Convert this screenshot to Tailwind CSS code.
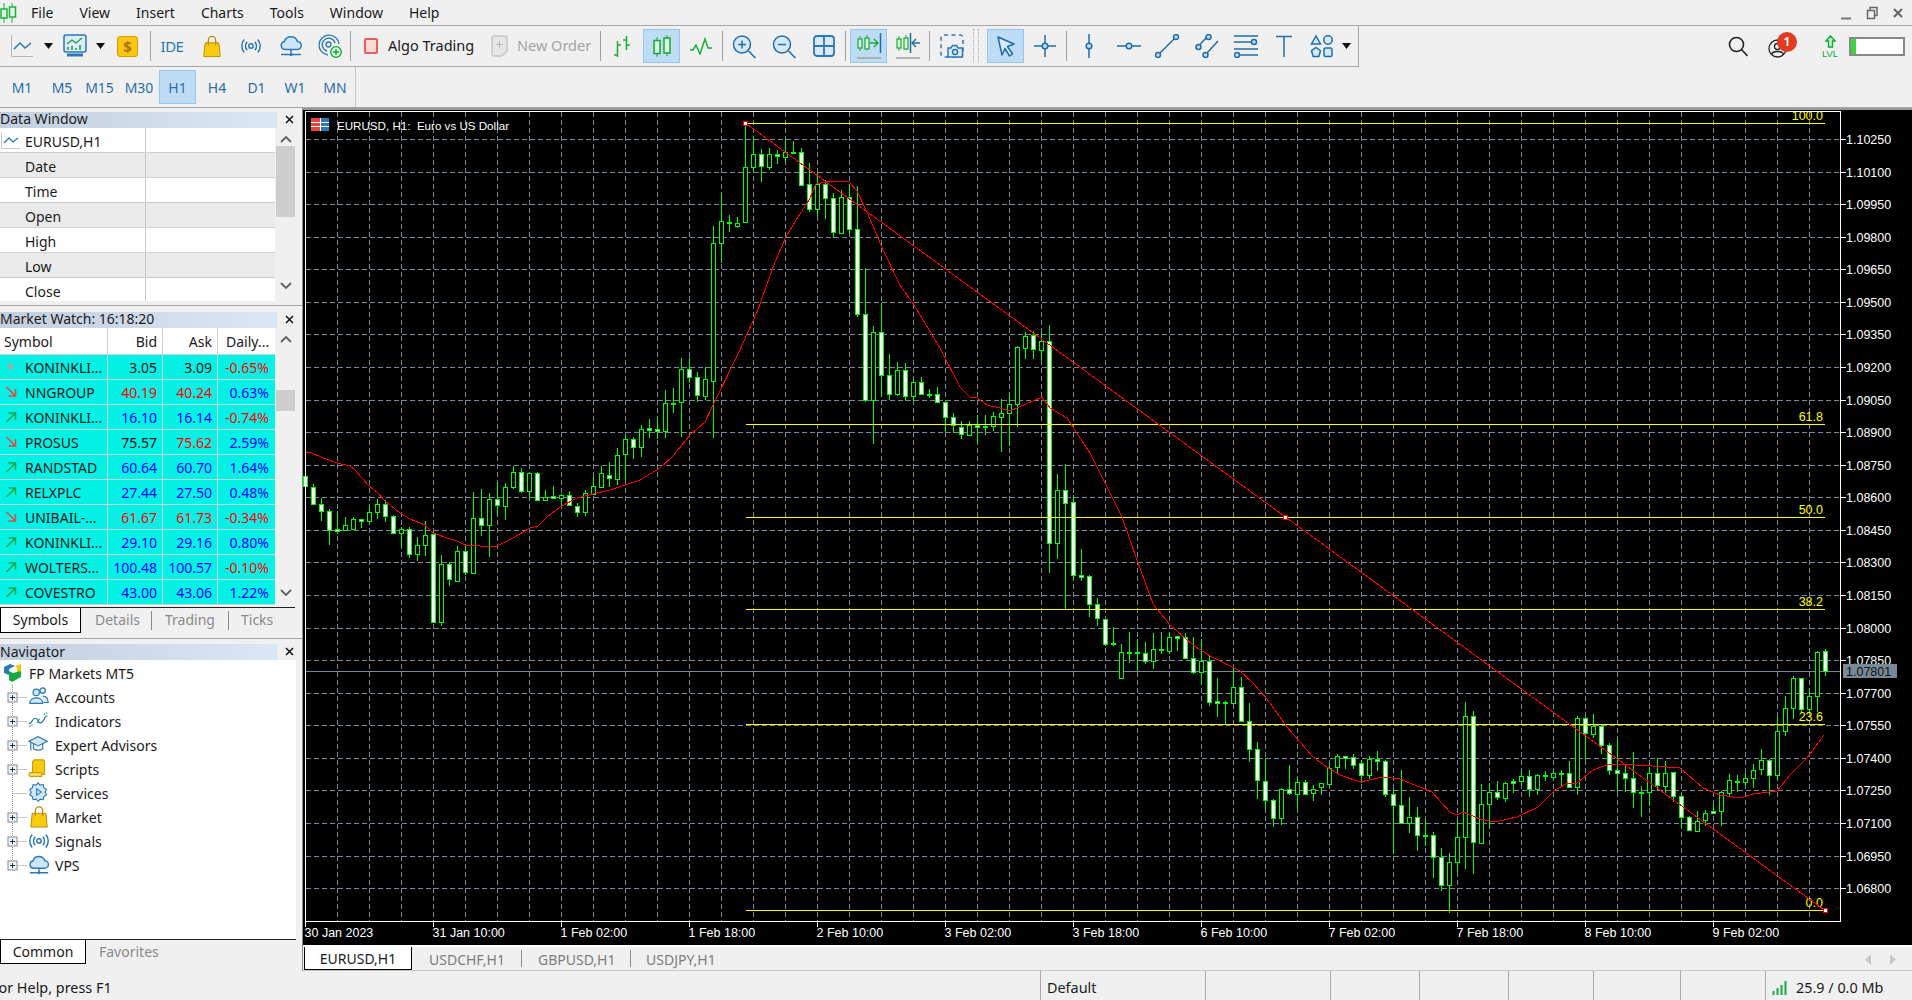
<!DOCTYPE html>
<html lang="en">
<head>
<meta charset="UTF-8" />
<title>MetaTrader 5</title>
<script src="https://cdn.jsdelivr.net/npm/@tailwindcss/browser@4"></script>
</head>
<body class="w-[1912px] h-[1000px] overflow-hidden bg-[#f0f0f0] text-[14px] text-[#1a1a1a] font-['Noto_Sans',sans-serif]">

<!-- shared icons -->
<svg class="hidden">
  <symbol id="i-bag" viewBox="0 0 24 24"><path d="M4.500 8h15l1.500 15H3z" fill="#f8cb10" stroke="#b98a00"/><path d="M8 11V5a4 4 0 0 1 8 0v6" fill="none" stroke="#b98a00" stroke-width="1.400"/></symbol>
  <symbol id="i-signal" viewBox="0 0 24 24"><g fill="none" stroke="#2a78b5" stroke-width="1.600"><circle cx="12" cy="12" r="2.400"/><path d="M7.800 7.500a6.500 6.500 0 0 0 0 9M16.200 7.500a6.500 6.500 0 0 1 0 9M4.600 5a10.500 10.500 0 0 0 0 14M19.400 5a10.500 10.500 0 0 1 0 14"/></g></symbol>
  <symbol id="i-cloud" viewBox="0 0 24 24"><path d="M6 15.500a4 4 0 0 1-.6-7.900 6.800 6.800 0 0 1 13-.2 4 4 0 0 1-.4 8.100z" fill="#cde5f8" stroke="#2a78b5" stroke-width="1.500"/><path d="M12 15.500v5M2 20.500h20" stroke="#2a78b5" stroke-width="1.500" fill="none"/><circle cx="12" cy="20.500" r="1.600" fill="#2a78b5"/></symbol>
  <symbol id="i-zoom" viewBox="0 0 24 24"><circle cx="10" cy="10" r="8.500" fill="#d5e9f9" stroke="#1f6ca8" stroke-width="1.500"/><path d="M16.500 16.500l7 7" stroke="#1f6ca8" stroke-width="1.500"/></symbol>
</svg>

<!-- menu -->
<div class="flex h-[26px] items-center border-b border-[#a6a6a6]">
  <svg class="ml-0 h-[20px] w-[17px]" viewBox="0 0 17 20"><path d="M4 0v20M12 0v20" stroke="#19b33a"/><rect x="1" y="6" width="6" height="9" fill="#dff7e2" stroke="#19b33a" stroke-width="1.500"/><rect x="9.500" y="4" width="6" height="10" fill="#dff7e2" stroke="#19b33a" stroke-width="1.500"/></svg>
  <nav class="ml-[14px] flex gap-[26px]">
    <span>File</span><span>View</span><span>Insert</span><span>Charts</span><span>Tools</span><span>Window</span><span>Help</span>
  </nav>
  <div class="ml-auto flex items-center gap-[14px] pr-[8px]">
    <svg class="h-[14px] w-[12px]" viewBox="0 0 12 14"><path d="M1 12.500h10" stroke="#777" stroke-width="2"/></svg>
    <svg class="h-[14px] w-[12px]" viewBox="0 0 12 14"><path d="M1.500 4.500h7v8h-7zM4 4V1.500h7v8H9" fill="none" stroke="#666" stroke-width="1.500"/></svg>
    <svg class="h-[14px] w-[12px]" viewBox="0 0 12 14"><path d="M2 3l8 8M10 3l-8 8" stroke="#666" stroke-width="2"/></svg>
  </div>
</div>

<!-- main toolbar -->
<div class="flex h-[41px]">
  <div class="flex w-[1359px] items-center border-r border-b border-[#a6a6a6] pl-[2px]">
    <div class="flex w-[39px] justify-center"><svg class="h-[22px] w-[22px]" viewBox="0 0 22 22"><path d="M.5 0v21.500H22" fill="none" stroke="#b5b5b5"/><path d="M3 14l6-6 5 5 6-5" fill="none" stroke="#2a78b5" stroke-width="1.500"/></svg></div>
    <div class="flex w-[14px] justify-center"><svg class="h-[6px] w-[9px]" viewBox="0 0 9 6"><path d="M0 0h9L4.500 6z" fill="#111"/></svg></div>
    <div class="flex w-[40px] justify-center"><svg class="h-[24px] w-[24px]" viewBox="0 0 24 24"><rect x="1" y="1" width="22" height="17" rx="2" fill="#d9ecfa" stroke="#2a78b5" stroke-width="1.500"/><path d="M4 10l5-4 4 3 6-5" fill="none" stroke="#1f9c3c" stroke-width="1.200"/><path d="M5 16v-3M9 16v-4M13 16v-2M17 16v-5" stroke="#1f9c3c" stroke-width="1.500"/><path d="M4 21h16" stroke="#2a78b5" stroke-width="3"/></svg></div>
    <div class="flex w-[10px] justify-center"><svg class="h-[6px] w-[9px]" viewBox="0 0 9 6"><path d="M0 0h9L4.500 6z" fill="#111"/></svg></div>
    <div class="flex w-[45px] justify-center"><div class="flex h-[21px] w-[21px] items-center justify-center rounded-[3px] border border-[#d99c00] bg-[#fbc513] text-[15px] font-bold text-[#a97300]">$</div></div>
    <div class="h-[30px] w-px bg-[#a0a0a0]"></div>
    <div class="flex w-[42px] justify-center text-[15px] tracking-[-0.5px] text-[#2a78b5]">IDE</div>
    <div class="flex w-[38px] justify-center"><svg class="h-[23px] w-[22px]"><use href="#i-bag"/></svg></div>
    <div class="flex w-[40px] justify-center"><svg class="h-[22px] w-[22px]"><use href="#i-signal"/></svg></div>
    <div class="flex w-[39px] justify-center"><svg class="h-[24px] w-[24px]"><use href="#i-cloud"/></svg></div>
    <div class="flex w-[40px] justify-center"><svg class="h-[24px] w-[24px]" viewBox="0 0 24 24"><g fill="none" stroke="#2a78b5" stroke-width="1.300"><path d="M10 21a10 10 0 1 1 11-11"/><path d="M9 17a6.500 6.500 0 1 1 8-8"/><circle cx="10.500" cy="10.500" r="2.500"/></g><circle cx="18" cy="18" r="5.300" fill="#d8f5df" stroke="#16a53a" stroke-width="1.300"/><path d="M18 15v6M15 18h6" stroke="#16a53a" stroke-width="1.300"/></svg></div>
    <div class="h-[30px] w-px bg-[#a0a0a0]"></div>
    <div class="ml-[13px] h-[16px] w-[14px] rounded-[2px] border-2 border-[#e8605a] bg-[#fbd9d5]"></div>
    <span class="ml-[10px] w-[86px] text-[14.500px] whitespace-nowrap">Algo Trading</span>
    <svg class="ml-[17px] h-[22px] w-[17px]" viewBox="0 0 17 22"><path d="M1 3a2 2 0 0 1 2-2h11a2 2 0 0 1 2 2v13l-5 5H3a2 2 0 0 1-2-2z" fill="#e6e6e6" stroke="#c4c4c4" stroke-width="1.400"/><path d="M8.500 6v7M5 9.500h7" stroke="#b5b5b5"/></svg>
    <span class="ml-[9px] w-[73px] text-[14.500px] whitespace-nowrap text-[#a3a3a3]">New Order</span>
    <div class="ml-[10px] h-[30px] w-px bg-[#a0a0a0]"></div>
    <div class="flex w-[42px] justify-center"><svg class="h-[24px] w-[20px]" viewBox="0 0 20 24"><path d="M5.500 7v16M2 21h3.500M5.500 11H9M14.500 2v14M11 6h3.500M14.500 11H18" fill="none" stroke="#17ad37" stroke-width="1.500"/></svg></div>
    <div class="flex h-[34px] w-[37px] items-center justify-center border border-[#91c8f6] bg-[#bedcf4]"><svg class="h-[24px] w-[20px]" viewBox="0 0 20 24"><path d="M5 3v20M15 1v21" stroke="#15a835"/><rect x="2" y="6.500" width="6" height="13" fill="#d9f8df" stroke="#15a835" stroke-width="1.500"/><rect x="12" y="4" width="6" height="15" fill="#d9f8df" stroke="#15a835" stroke-width="1.500"/></svg></div>
    <div class="flex w-[42px] justify-center"><svg class="h-[18px] w-[22px]" viewBox="0 0 22 18"><path d="M0 13h3l3-5 4 9 5-15 3 9h4" fill="none" stroke="#17ad37" stroke-width="1.500"/></svg></div>
    <div class="h-[30px] w-px bg-[#a0a0a0]"></div>
    <div class="flex w-[42px] justify-center"><svg class="h-[25px] w-[24px]" viewBox="0 0 24 24"><use href="#i-zoom"/><path d="M10 6v8M6 10h8" stroke="#1f6ca8" stroke-width="1.500"/></svg></div>
    <div class="flex w-[38px] justify-center"><svg class="h-[25px] w-[24px]" viewBox="0 0 24 24"><use href="#i-zoom"/><path d="M6 10h8" stroke="#1f6ca8" stroke-width="1.500"/></svg></div>
    <div class="flex w-[42px] justify-center"><svg class="h-[22px] w-[22px]" viewBox="0 0 22 22"><rect x="1" y="1" width="20" height="20" rx="3" fill="#d9ebf9" stroke="#2a78b5" stroke-width="1.800"/><path d="M11 1v20M1 11h20" stroke="#2a78b5" stroke-width="1.800"/></svg></div>
    <div class="h-[30px] w-px bg-[#a0a0a0]"></div>
    <div class="ml-[4px] flex h-[34px] w-[37px] items-center justify-center border border-[#91c8f6] bg-[#bedcf4]"><svg class="h-[28px] w-[26px]" viewBox="0 0 26 28"><path d="M4 4v15M11 3v15" stroke="#15a835"/><rect x="2" y="7" width="4" height="9" fill="#d9f8df" stroke="#15a835" stroke-width="1.200"/><rect x="9" y="6" width="4" height="11" fill="#d9f8df" stroke="#15a835" stroke-width="1.200"/><path d="M14 11h7M18 7l4 4-4 4" fill="none" stroke="#15a835" stroke-width="1.400"/><path d="M24.500 1v20" stroke="#1f6ca8" stroke-width="1.500"/><path d="M1 26h24" stroke="#a0a0a0" stroke-width="1.500"/></svg></div>
    <div class="flex w-[42px] justify-center"><svg class="h-[28px] w-[26px]" viewBox="0 0 26 28"><path d="M4 4v15M11 3v15" stroke="#15a835"/><rect x="2" y="7" width="4" height="9" fill="#d9f8df" stroke="#15a835" stroke-width="1.200"/><rect x="9" y="6" width="4" height="11" fill="#d9f8df" stroke="#15a835" stroke-width="1.200"/><path d="M15.500 1v20" stroke="#1f6ca8" stroke-width="1.500"/><path d="M25 11h-7M21 7l-4 4 4 4" fill="none" stroke="#1f6ca8" stroke-width="1.400"/><path d="M1 26h24" stroke="#a0a0a0" stroke-width="1.500"/></svg></div>
    <div class="h-[30px] w-px bg-[#a0a0a0]"></div>
    <div class="flex w-[43px] justify-center"><svg class="h-[24px] w-[24px]" viewBox="0 0 24 24"><rect x="1" y="1" width="22" height="22" rx="3" fill="none" stroke="#2a78b5" stroke-width="1.500" stroke-dasharray="4 3.500"/><path d="M8 23v-9h3l1.500-2.500h4l1.500 2.500h4.500v9z" fill="#d9ebf9" stroke="#2a78b5" stroke-width="1.500"/><circle cx="15" cy="18" r="2.500" fill="none" stroke="#2a78b5" stroke-width="1.500"/></svg></div>
    <div class="h-[34px] w-[6px] border-x border-dotted border-[#b0b0b0]"></div>
    <div class="ml-[8px] flex h-[34px] w-[37px] items-center justify-center border border-[#91c8f6] bg-[#bedcf4]"><svg class="h-[21px] w-[18px]" viewBox="0 0 18 21"><path d="M1 1l16 7-6.500 2.500L15.500 18l-3 2-4.500-7.500L5 19z" fill="#d9ebf9" stroke="#1f6ca8" stroke-width="1.500" stroke-linejoin="round"/></svg></div>
    <div class="flex w-[42px] justify-center"><svg class="h-[22px] w-[22px]" viewBox="0 0 22 22"><path d="M11 0v8M11 14v8M0 11h8M14 11h8" stroke="#1f6ca8" stroke-width="1.500"/><circle cx="11" cy="11" r="2.800" fill="#bfe0f8" stroke="#1f6ca8" stroke-width="1.500"/></svg></div>
    <div class="h-[30px] w-px bg-[#a0a0a0]"></div>
    <div class="flex w-[43px] justify-center"><svg class="h-[24px] w-[10px]" viewBox="0 0 10 24"><path d="M5 0v9M5 15v9" stroke="#1f6ca8" stroke-width="1.500"/><circle cx="5" cy="12" r="2.800" fill="#bfe0f8" stroke="#1f6ca8" stroke-width="1.500"/></svg></div>
    <div class="flex w-[37px] justify-center"><svg class="h-[10px] w-[24px]" viewBox="0 0 24 10"><path d="M0 5h9M15 5h9" stroke="#1f6ca8" stroke-width="1.500"/><circle cx="12" cy="5" r="2.800" fill="#bfe0f8" stroke="#1f6ca8" stroke-width="1.500"/></svg></div>
    <div class="flex w-[40px] justify-center"><svg class="h-[24px] w-[24px]" viewBox="0 0 24 24"><path d="M5 19L19 5" stroke="#1f6ca8" stroke-width="1.500"/><circle cx="3" cy="21" r="2.500" fill="#bfe0f8" stroke="#1f6ca8" stroke-width="1.500"/><circle cx="21" cy="3" r="2.500" fill="#bfe0f8" stroke="#1f6ca8" stroke-width="1.500"/></svg></div>
    <div class="flex w-[39px] justify-center"><svg class="h-[24px] w-[24px]" viewBox="0 0 24 24"><path d="M4.500 11L12 3M12 19l11-12" stroke="#1f6ca8" stroke-width="1.500"/><circle cx="3.500" cy="13" r="2.500" fill="#bfe0f8" stroke="#1f6ca8" stroke-width="1.500"/><circle cx="13.500" cy="3" r="2.500" fill="#bfe0f8" stroke="#1f6ca8" stroke-width="1.500"/><circle cx="10.500" cy="21" r="2.500" fill="#bfe0f8" stroke="#1f6ca8" stroke-width="1.500"/></svg></div>
    <div class="flex w-[39px] justify-center"><svg class="h-[24px] w-[24px]" viewBox="0 0 24 24"><path d="M0 2h24M0 8h17M0 15h24M6 21h18" stroke="#1f6ca8" stroke-width="1.500"/><circle cx="20" cy="8" r="2.500" fill="#bfe0f8" stroke="#1f6ca8" stroke-width="1.500"/><circle cx="3" cy="21" r="2.500" fill="#bfe0f8" stroke="#1f6ca8" stroke-width="1.500"/></svg></div>
    <div class="flex w-[38px] justify-center"><svg class="h-[22px] w-[16px]" viewBox="0 0 16 22"><path d="M0 1.500h16M8 1.500V22" stroke="#1f6ca8" stroke-width="1.500"/></svg></div>
    <div class="flex w-[37px] justify-center"><svg class="h-[24px] w-[24px]" viewBox="0 0 24 24"><g fill="#d3e8f9" stroke="#1f6ca8" stroke-width="1.500"><path d="M6 2l4.500 8h-9z"/><circle cx="18" cy="6" r="4.200"/><path d="M6 13.500l4.500 3.200-1.700 5.800H3.200l-1.700-5.800z"/><rect x="14" y="14" width="8" height="8.500" rx="1.500"/></g></svg></div>
    <div class="flex w-[12px] justify-center"><svg class="h-[6px] w-[9px]" viewBox="0 0 9 6"><path d="M0 0h9L4.500 6z" fill="#111"/></svg></div>
  </div>
  <!-- account / level widgets -->
  <div class="flex flex-1 items-center">
    <svg class="ml-[369px] h-[21px] w-[20px]" viewBox="0 0 20 21"><circle cx="8.500" cy="8.500" r="7" fill="none" stroke="#222" stroke-width="1.600"/><path d="M13.500 13.500l6 6.500" stroke="#222" stroke-width="1.600"/></svg>
    <div class="relative ml-[20px] h-[24px] w-[22px]">
      <svg class="mt-[4px] h-[19px] w-[19px]" viewBox="0 0 19 19"><circle cx="9.500" cy="9.500" r="8.500" fill="none" stroke="#222" stroke-width="1.300"/><circle cx="9.500" cy="7.500" r="3" fill="none" stroke="#222" stroke-width="1.300"/><path d="M3.500 15.500c1-4 11-4 12 0" fill="none" stroke="#222" stroke-width="1.300"/></svg>
      <span class="absolute -top-[3px] left-[9px] flex h-[20px] w-[20px] items-center justify-center rounded-full bg-[#e23b22] text-[13px] font-semibold text-white">1</span>
    </div>
    <div class="ml-[29px] flex w-[22px] flex-col items-center">
      <svg class="h-[13px] w-[11px]" viewBox="0 0 11 13"><path d="M5.500 1L10 6H7.500v6h-4V6H1z" fill="#c5f2cf" stroke="#11a833" stroke-width="1.400"/></svg>
      <span class="mt-[1px] font-['Liberation_Sans',sans-serif] text-[9.500px] leading-[10px] text-[#11a833]">LVL</span>
    </div>
    <div class="ml-[8px] flex h-[19px] w-[56px] border-2 border-[#888] bg-white"><div class="w-[5px] bg-[#3cd63c]"></div></div>
  </div>
</div>

<!-- timeframes -->
<div class="flex h-[41px] items-center border-b border-[#a6a6a6]">
  <div class="flex h-full w-[356px] items-center border-r border-[#c4c4c4] text-[#2b6ea6]">
    <span class="flex w-[44px] justify-center">M1</span>
    <span class="flex w-[36px] justify-center">M5</span>
    <span class="flex w-[39px] justify-center">M15</span>
    <span class="flex w-[40px] justify-center">M30</span>
    <span class="flex h-[34px] w-[37px] items-center justify-center border border-[#91c8f6] bg-[#bedcf4]">H1</span>
    <span class="flex w-[42px] justify-center">H4</span>
    <span class="flex w-[37px] justify-center">D1</span>
    <span class="flex w-[40px] justify-center">W1</span>
    <span class="flex w-[40px] justify-center">MN</span>
  </div>
</div>

<!-- workspace -->
<div class="flex h-[863px]">
  <!-- left panels -->
  <aside class="flex w-[303px] flex-col border-r border-[#8a8a8a]">
    <!-- data window -->
    <section class="flex h-[198px] flex-col border-b border-[#a6a6a6] pt-[3px] pr-[6px]">
      <header class="flex h-[17px] items-center">
        <div class="h-[16px] w-[277px] bg-gradient-to-r from-[#c2cfdf] to-[#dbe7f5] leading-[13px]">Data Window</div>
        <svg class="ml-[8px] h-[9px] w-[9px]" viewBox="0 0 9 9"><path d="M1 1l7 7M8 1L1 8" stroke="#111" stroke-width="1.500"/></svg>
      </header>
      <div class="flex h-[173px]">
        <div id="data-rows" class="w-[275px] overflow-hidden bg-white"></div>
        <div class="flex w-[21px] flex-col items-center bg-[#f0f0f0]">
          <svg class="mt-[8px] h-[7px] w-[12px]" viewBox="0 0 12 7"><path d="M1 6l5-5 5 5" fill="none" stroke="#606060" stroke-width="1.800"/></svg>
          <div class="mt-[3px] h-[71px] w-[19px] bg-[#cdcdcd]"></div>
          <svg class="mt-[65px] h-[7px] w-[12px]" viewBox="0 0 12 7"><path d="M1 1l5 5 5-5" fill="none" stroke="#606060" stroke-width="1.800"/></svg>
        </div>
      </div>
    </section>
    <!-- market watch -->
    <section class="flex h-[333px] flex-col border-b border-[#a6a6a6] pt-[5px] pr-[6px]">
      <header class="flex h-[17px] items-center">
        <div class="h-[16px] w-[277px] bg-gradient-to-r from-[#c2cfdf] to-[#dbe7f5] leading-[13px]">Market Watch: 16:18:20</div>
        <svg class="ml-[8px] h-[9px] w-[9px]" viewBox="0 0 9 9"><path d="M1 1l7 7M8 1L1 8" stroke="#111" stroke-width="1.500"/></svg>
      </header>
      <div class="flex h-[278px]">
        <div class="w-[275px]">
          <div class="flex h-[27px] items-center border-b border-[#d0d0d0] bg-white">
            <span class="h-full w-[108px] border-r border-[#d0d0d0] pl-[4px] leading-[28px]">Symbol</span>
            <span class="h-full w-[55px] border-r border-[#d0d0d0] pr-[5px] text-right leading-[28px]">Bid</span>
            <span class="h-full w-[55px] border-r border-[#d0d0d0] pr-[5px] text-right leading-[28px]">Ask</span>
            <span class="h-full flex-1 pl-[8px] leading-[28px] whitespace-nowrap">Daily...</span>
          </div>
          <div id="quote-rows"></div>
        </div>
        <div class="flex w-[21px] flex-col items-center bg-[#f0f0f0]">
          <svg class="mt-[8px] h-[7px] w-[12px]" viewBox="0 0 12 7"><path d="M1 6l5-5 5 5" fill="none" stroke="#606060" stroke-width="1.800"/></svg>
          <div class="mt-[47px] h-[21px] w-[19px] bg-[#cdcdcd]"></div>
          <svg class="mt-[178px] h-[7px] w-[12px]" viewBox="0 0 12 7"><path d="M1 1l5 5 5-5" fill="none" stroke="#606060" stroke-width="1.800"/></svg>
        </div>
      </div>
      <div class="mt-[1px] flex h-[26px] w-[295px] border-t border-[#222] text-[#8a8a8a]">
        <span class="h-[25px] w-[81px] border-x border-b border-black bg-white text-center leading-[24px] text-[#1a1a1a]">Symbols</span>
        <span class="my-[3px] w-[71px] border-r border-[#8a8a8a] pl-[14px] leading-[18px]">Details</span>
        <span class="my-[3px] w-[77px] border-r border-[#8a8a8a] pl-[13px] leading-[18px]">Trading</span>
        <span class="my-[3px] pl-[12px] leading-[18px]">Ticks</span>
      </div>
    </section>
    <!-- navigator -->
    <section class="flex flex-1 flex-col pt-[4px] pr-[6px]">
      <header class="flex h-[17px] items-center">
        <div class="h-[16px] w-[277px] bg-gradient-to-r from-[#c2cfdf] to-[#dbe7f5] leading-[16px]">Navigator</div>
        <svg class="ml-[8px] h-[9px] w-[9px]" viewBox="0 0 9 9"><path d="M1 1l7 7M8 1L1 8" stroke="#111" stroke-width="1.500"/></svg>
      </header>
      <div class="h-[279px] w-[296px] bg-white pt-[1px]">
        <div class="flex h-[24px] items-center">
          <svg class="ml-[3px] h-[20px] w-[19px]" viewBox="0 0 19 20"><path d="M1 4l6-3 5 2-6 3v6l-5-2z" fill="#2a78b5"/><path d="M12 3l6-2v7l-4 2V5z" fill="#f6c512"/><path d="M6 8l4 2 8-2v6l-9 5-3-2z" fill="#1aa741"/></svg>
          <span class="ml-[7px]">FP Markets MT5</span>
        </div>
        <div id="nav-rows"></div>
      </div>
      <div class="flex h-[24px] w-[296px] border-t border-[#222] text-[#8a8a8a]">
        <span class="h-[24px] w-[86px] border-x border-b border-black bg-white text-center leading-[23px] text-[#1a1a1a]">Common</span>
        <span class="pl-[13px] leading-[23px]">Favorites</span>
      </div>
    </section>
  </aside>

  <!-- chart column -->
  <div class="flex flex-1 flex-col">
    <div class="h-[837px] border-t-2 border-[#9a9a9a] bg-black">
      <svg id="chart" class="block" width="1609" height="835" viewBox="303 110 1609 835"></svg>
    </div>
    <div class="h-[2px] bg-white"></div>
    <div class="flex h-[24px] border-b border-[#c8c8c8] pl-[1px] text-[#7c7c7c]">
      <span class="h-[23px] w-[108px] border-x border-b border-black bg-white text-center leading-[24px] text-[#1a1a1a]">EURUSD,H1</span>
      <span class="my-[3px] w-[110px] border-r border-[#8a8a8a] pl-[17px] leading-[19px]">USDCHF,H1</span>
      <span class="my-[3px] w-[109px] border-r border-[#8a8a8a] pl-[16px] leading-[19px]">GBPUSD,H1</span>
      <span class="my-[3px] pl-[15px] leading-[19px]">USDJPY,H1</span>
      <svg class="mt-[7px] ml-auto h-[11px] w-[6px]" viewBox="0 0 6 11"><path d="M6 0v11L0 5.500z" fill="#c8c8c8"/></svg>
      <svg class="mt-[7px] mr-[16px] ml-[19px] h-[11px] w-[6px]" viewBox="0 0 6 11"><path d="M0 0v11l6-5.500z" fill="#c8c8c8"/></svg>
    </div>
  </div>
</div>

<!-- status bar -->
<div class="flex h-[29px] items-center text-[14.400px]">
  <span class="h-full w-[1041px] overflow-hidden border-r border-[#a8a8a8] leading-[33px]"><span class="-ml-[9px] inline-block">For Help, press F1</span></span>
  <span class="h-full w-[165px] border-r border-[#a8a8a8] pl-[6px] leading-[33px]">Default</span>
  <span class="h-full w-[125px] border-r border-[#a8a8a8]"></span>
  <span class="h-full w-[89px] border-r border-[#a8a8a8]"></span>
  <span class="h-full w-[89px] border-r border-[#a8a8a8]"></span>
  <span class="h-full w-[85px] border-r border-[#a8a8a8]"></span>
  <span class="h-full w-[87px] border-r border-[#a8a8a8]"></span>
  <span class="h-full w-[85px] border-r border-[#a8a8a8]"></span>
  <svg class="mt-[5px] ml-[6px] h-[14px] w-[15px]" viewBox="0 0 15 14"><path d="M1.500 14v-4M5.500 14V7M9.500 14V4M13.500 14V0" stroke="#1aa741" stroke-width="2"/></svg>
  <span class="mt-[4px] ml-[9px] whitespace-nowrap">25.9 / 0.0 Mb</span>
</div>

<script>
  // side panels
  const dataLabels = ['EURUSD,H1', 'Date', 'Time', 'Open', 'High', 'Low', 'Close'];
  document.getElementById('data-rows').innerHTML = dataLabels.map((label, i) => `
    <div class="flex h-[25px] border-b border-[#d0d0d0] ${i % 2 ? 'bg-[#eaeaea]' : 'bg-white'}">
      <div class="flex w-[146px] items-center border-r border-[#c8c8c8] pt-[2px] pl-[25px]">${label}</div>
    </div>`).join('');
  document.querySelector('#data-rows > div > div').insertAdjacentHTML('afterbegin',
    '<svg class="-ml-[24px] mr-[5px] h-[16px] w-[19px]" viewBox="0 0 19 16"><path d="M.5 0v15.500H19" fill="none" stroke="#c8c8c8"/><path d="M3 10l5-5 4 4 5-4" fill="none" stroke="#2a78b5" stroke-width="1.300"/></svg>');

  const B = 'text-[#0000ff]', R = 'text-[#ff0000]', K = 'text-[#111111]';
  const quotes = [
    ['KONINKLI...', '3.05', '3.09', '-0.65%', 'flat', K, K, R],
    ['NNGROUP', '40.19', '40.24', '0.63%', 'down', R, R, B],
    ['KONINKLI...', '16.10', '16.14', '-0.74%', 'up', B, B, R],
    ['PROSUS', '75.57', '75.62', '2.59%', 'down', K, R, B],
    ['RANDSTAD', '60.64', '60.70', '1.64%', 'up', B, B, B],
    ['RELXPLC', '27.44', '27.50', '0.48%', 'up', B, B, B],
    ['UNIBAIL-...', '61.67', '61.73', '-0.34%', 'down', R, R, R],
    ['KONINKLI...', '29.10', '29.16', '0.80%', 'up', B, B, B],
    ['WOLTERS...', '100.48', '100.57', '-0.10%', 'up', B, B, R],
    ['COVESTRO', '43.00', '43.06', '1.22%', 'up', B, B, B],
  ];
  const marks = {
    flat: '<rect x="3" y="4" width="5" height="5" fill="#a8a8a8"/>',
    up: '<path d="M1.500 12L10 3.500M3.500 3h7v7" fill="none" stroke="#1aa741" stroke-width="1.500"/>',
    down: '<path d="M1.500 2L10 10.500M3.500 11h7V4" fill="none" stroke="#e6483a" stroke-width="1.500"/>',
  };
  document.getElementById('quote-rows').innerHTML = quotes.map(q => `
    <div class="flex h-[25px] border-b border-[#c8d8d8] bg-[#04f1e6] leading-[25px]">
      <div class="flex w-[108px] items-center border-r border-[#c8d8d8] pl-[5px]">
        <svg class="h-[14px] w-[12px] shrink-0" viewBox="0 0 12 14">${marks[q[4]]}</svg>
        <span class="ml-[8px] whitespace-nowrap">${q[0]}</span>
      </div>
      <div class="w-[55px] border-r border-[#c8d8d8] pr-[5px] text-right ${q[5]}">${q[1]}</div>
      <div class="w-[55px] border-r border-[#c8d8d8] pr-[5px] text-right ${q[6]}">${q[2]}</div>
      <div class="flex-1 pr-[6px] text-right ${q[7]}">${q[3]}</div>
    </div>`).join('');

  const navIcons = {
    accounts: '<g fill="#d3e8f9" stroke="#2a78b5" stroke-width="1.300"><circle cx="9" cy="7" r="3.500"/><path d="M2 19c0-8 14-8 14 0z"/><circle cx="16" cy="5" r="3"/><path d="M16 11c3 0 6 2 6 7h-5"/></g>',
    indicators: '<path d="M1 15c4 0 3-6 7-6s2 6 6 5 3-7 7-8" fill="none" stroke="#1f6ca8" stroke-width="1.300"/><path d="M1 18l4-2M17 5l4-2M10 14l3-5" stroke="#1aa741" stroke-width="1.300" stroke-dasharray="2 1"/>',
    experts: '<path d="M1 8l10-5 10 5-10 5z" fill="#d3e8f9" stroke="#2a78b5" stroke-width="1.300"/><path d="M6 11v5c3 2 7 2 10 0v-5" fill="none" stroke="#2a78b5" stroke-width="1.300"/><path d="M3 9v9" stroke="#2a78b5" stroke-width="1.300"/>',
    scripts: '<path d="M7 2h9a2 2 0 0 1 2 2v14H5V4z" fill="#f8cb10" stroke="#c99b00" stroke-width="1.200"/><path d="M3 20a2 2 0 0 1 0-4h12v4z" fill="#fbe26a" stroke="#c99b00" stroke-width="1.200"/>',
    services: '<path d="M11 1l2.500 3 4-.7.8 4 3.500 2.300-2 3.400 2 3.400-3.500 2.300-.8 4-4-.7L11 25 8.500 22l-4 .7-.8-4L.2 16.400l2-3.400-2-3.400 3.500-2.300.8-4 4 .7z" transform="scale(.85) translate(2 0)" fill="#d3e8f9" stroke="#2a78b5" stroke-width="1.400"/><path d="M9.500 7.500l5 3.500-5 3.500z" fill="none" stroke="#2a78b5" stroke-width="1.200"/>',
    market: '<use href="#i-bag"/>',
    signals: '<use href="#i-signal"/>',
    vps: '<use href="#i-cloud"/>',
  };
  const navItems = [
    ['Accounts', 'accounts', 1], ['Indicators', 'indicators', 1], ['Expert Advisors', 'experts', 1],
    ['Scripts', 'scripts', 1], ['Services', 'services', 0], ['Market', 'market', 1],
    ['Signals', 'signals', 1], ['VPS', 'vps', 1],
  ];
  document.getElementById('nav-rows').innerHTML = navItems.map((item, i) => `
    <div class="flex h-[24px] items-center">
      <svg class="h-[24px] w-[28px] shrink-0" viewBox="0 0 28 24">
        <path d="M12.500 0V${i === navItems.length - 1 ? 12 : 24}M12.500 12.500H27" stroke="#8a8a8a" stroke-dasharray="1 1" fill="none"/>
        ${item[2] ? '<rect x="8" y="8" width="9" height="9" fill="#f4f4f4" stroke="#8a8a8a"/><path d="M10 12.500h5M12.500 10v5" stroke="#1a2f7a"/>' : ''}
      </svg>
      <svg class="h-[22px] w-[22px] shrink-0" viewBox="0 0 24 24">${navIcons[item[1]]}</svg>
      <span class="ml-[5px]">${item[0]}</span>
    </div>`).join('');

  // ---- chart ----
  // candles per pixel row: [high, bodyTop, bodyBottom, low, white]; rows are stored at 3x off a base y
  const blocks = [
    [420, [[160,167,198,200,1],[192,200,253,255,1],[235,253,274,303,1],[268,274,329,375,1],[274,328,332,342,1],[290,314,329,332,0],[290,296,326,328,0],[296,296,304,325,1],[256,277,302,312,0],[236,253,277,297,0],[240,253,289,305,1],[285,289,338,340,1],[322,328,338,377,0],[322,328,403,413,1],[352,374,403,423,0],[304,344,374,407,0],[335,341,607,610,1],[405,433,607,617,0],[425,433,478,498,1],[378,394,482,487,0],[378,394,457,466,1],[217,295,458,458,0],[207,295,316,348,1],[219,238,316,410,0],[186,236,256,288,1],[190,202,257,300,0],[138,157,202,208,0],[145,157,212,218,1],[155,160,212,240,0],[155,160,241,242,1],[210,230,241,242,0],[198,227,233,236,1],[222,224,233,260,0],[214,224,256,258,1],[250,257,277,291,1],[210,220,277,288,0],[172,199,222,224,0],[137,160,200,204,0],[127,164,175,200,1],[83,106,176,195,0],[45,58,103,180,0],[52,58,82,116,1],[15,28,82,110,0],[-3,25,29,53,1],[-10,26,34,56,1]]],
    [105, [[855,895,977,998,0],[850,895,897,925,1],[760,793,892,995,0],[760,793,815,835,1],[800,815,870,892,1],[787,823,873,885,0],[363,415,827,998,0],[265,349,415,475,0],[330,350,352,380,1],[335,353,362,368,0],[60,187,352,352,0],[92,148,187,205,0],[132,148,184,230,1],[130,148,185,195,0],[135,148,153,177,1],[103,142,155,170,0],[108,140,144,147,1],[130,140,240,243,1],[175,236,313,320,1],[205,236,313,332,0],[225,237,280,342,1],[265,278,382,398,1],[255,277,383,385,0],[238,275,373,387,1],[243,373,626,635,1],[490,626,886,890,1],[663,682,886,1017,0],[595,682,811,875,1],[748,811,868,885,1],[770,796,866,872,0],[773,796,872,888,1],[825,832,872,888,0],[815,832,868,868,1],[852,868,870,880,1],[847,868,891,893,1]]],
    [300, [[305,307,352,395,1],[340,352,376,398,1],[363,380,403,417,1],[363,375,404,407,0],[346,376,382,430,1],[346,379,382,405,1],[337,349,379,393,0],[297,340,350,455,0],[280,313,338,437,0],[137,142,313,380,0],[97,108,143,177,0],[93,106,148,177,1],[97,123,149,180,0],[75,124,730,818,1],[523,571,730,776,0],[492,571,610,928,1],[586,607,826,843,1],[747,826,830,843,1],[826,829,913,950,1],[895,913,955,978,1],[958,958,1033,1037,1],[982,1030,1032,1037,1],[1033,1057,1135,1135,0],[996,1057,1059,1088,1],[1018,1057,1060,1113,1],[1026,1060,1084,1092,1],[998,1048,1084,1106,0],[996,1048,1051,1062,1],[996,1012,1052,1062,0],[1008,1009,1013,1052,1],[1000,1010,1073,1078,1],[1012,1073,1117,1122,1],[1018,1083,1117,1155,0],[1068,1084,1206,1218,1]]],
    [670, [[24,93,100,140,1],[92,96,100,162,1],[-9,52,98,100,0],[21,52,152,155,1],[98,152,238,275,1],[217,238,331,386,1],[265,334,391,418,1],[387,391,445,470,1],[355,358,445,465,0],[286,358,370,376,1],[322,337,371,417,0],[330,337,371,374,1],[346,358,370,392,0],[340,340,352,374,0],[280,293,341,346,0],[252,258,292,312,0],[258,258,263,296,1],[252,262,284,296,1],[270,280,316,340,1],[258,268,316,330,0],[243,268,274,302,1],[270,274,373,380,1],[358,373,406,551,1],[300,406,460,460,1],[381,442,460,488,0],[411,442,496,542,1],[447,496,497,527,1],[487,496,562,624,1]]],
    [620, [[685,712,795,812,1],[700,727,796,880,0],[600,650,727,755,0],[247,287,650,747,0],[272,287,667,762,1],[492,553,668,672,0],[490,517,553,627,0],[484,517,532,540,1],[487,490,535,546,0],[478,482,488,518,1],[452,469,482,495,0],[450,469,508,530,1],[462,466,508,525,0],[452,465,469,483,1],[452,460,470,483,0],[450,459,460,500,1],[423,460,502,502,1],[288,295,502,525,0],[292,295,340,420,1],[282,319,341,353,0],[315,319,376,402,1],[370,376,451,465,1],[358,451,460,515,1],[432,460,475,515,1],[396,475,517,565,1],[497,516,518,590,1],[440,460,515,558,0],[415,460,496,513,1],[424,460,497,520,0],[455,457,529,545,1],[522,529,590,623,1],[588,590,631,632,1],[573,604,634,635,0],[570,580,600,618,0],[552,574,580,583,1],[513,516,574,618,0],[462,481,518,527,0],[465,482,487,515,1],[460,473,487,497,0],[433,449,473,503,0],[388,421,448,465,0],[418,421,466,525,1],[292,334,466,480,0],[229,265,334,348,0],[168,175,265,297,0],[173,175,268,280,1],[205,229,268,275,0],[93,97,229,275,0],[88,94,154,167,1]]],
  ];
  const candles = blocks.flatMap(([base, rows]) => rows.map(r => [
    base + r[0] / 3, base + r[1] / 3, base + r[2] / 3, base + r[3] / 3, r[4],
  ]));

  // moving average, [x, y] page pixels
  const ma = [
    [306,452],[310,452],[323,458],[337,463],[350,466],[355,470],[369,486],[377,492],[385,501],[400,513],[410,519],[425,525],[433,533],[447,538],[457,541],[465,545],[477,545],[483,547],[497,546],[513,538],[530,528],[538,526],[547,517],[560,507],[577,498],[593,494],[610,490],[640,480],[660,468],
    [673,456],[690,435],[705,422],[713,405],[739,352],[757,312],[775,262],[786,237],[798,217],[809,200],[816,184],[826,182],[841,181],[849,182],[857,191],[867,212],[884,252],[900,285],[914,305],
    [940,348],[960,387],[970,397],[977,398],[987,405],[1000,408],[1010,411],[1042,397],[1050,408],[1067,418],[1090,453],[1107,487],[1122,517],[1137,560],[1153,604],[1170,625],[1193,645],[1210,656],[1240,671],[1253,683],[1267,699],
    [1287,727],[1313,757],[1327,767],[1340,775],[1360,782],[1383,777],[1400,779],[1432,792],[1450,812],[1457,815],[1463,812],[1480,819],[1495,822],[1517,817],[1538,807],[1555,790],[1568,783],[1577,783],[1593,770],[1607,765],[1617,764],[1653,766],[1680,768],[1703,788],[1720,795],[1740,798],[1753,794],[1777,791],[1790,775],[1807,758],[1824,735],
  ];

  const fibY = [[123.500, '100.0'], [424.500, '61.8'], [517.500, '50.0'], [609.500, '38.2'], [724.500, '23.6'], [910.500, '0.0']];
  const dates = ['30 Jan 2023', '31 Jan 10:00', '1 Feb 02:00', '1 Feb 18:00', '2 Feb 10:00', '3 Feb 02:00', '3 Feb 18:00', '6 Feb 10:00', '7 Feb 02:00', '7 Feb 18:00', '8 Feb 10:00', '9 Feb 02:00'];

  let s = '<g shape-rendering="crispEdges" font-family="Liberation Sans" font-size="12.500">';
  // grid
  for (let k = 1; 305.5 + 32 * k < 1841; k++) {
    const x = 305.5 + 32 * k;
    s += `<path d="M${x} 112V921" stroke="#778899" stroke-dasharray="5 3"/>`;
  }
  for (let k = 0; k < 24; k++) {
    const y = Math.round(139 + 32.57 * k) + .5;
    s += `<path d="M306 ${y}H1841" stroke="#778899" stroke-dasharray="5 3"/>`;
    s += `<path d="M1841 ${y}h5" stroke="#fff"/>`;
    s += `<text x="1846" y="${y + 4.5}" fill="#fff">${(1.1025 - k * 0.0015).toFixed(5)}</text>`;
  }
  dates.forEach((d, k) => {
    const x = 305.5 + 128 * k;
    s += `<path d="M${x} 921v6" stroke="#fff"/><text x="${x - 1}" y="937" fill="#fff">${d}</text>`;
  });
  // current price line
  s += '<path d="M306 671.5H1841" stroke="#778899"/>';
  // candles
  candles.forEach((c, i) => {
    const x = 305.5 + 8 * i;
    const t = Math.round(c[1]) + .5, b = Math.max(Math.round(c[2]), Math.round(c[1]) + 1) + .5;
    s += `<path d="M${x} ${Math.round(c[0])}V${Math.round(c[3])}" stroke="#00ff00"/>`;
    s += `<rect x="${x - 2}" y="${t}" width="4" height="${b - t}" fill="${c[4] ? '#fff' : '#000'}" stroke="#00ff00"/>`;
  });
  // fibonacci
  fibY.forEach(([y, label]) => {
    s += `<path d="M746 ${y}H1825" stroke="#ffff00"/>`;
    s += `<text x="1823" y="${Math.floor(y) - 3}" text-anchor="end" fill="#ffff00">${label}</text>`;
  });
  s += '<path d="M746 123.500L1825 910.500" stroke="#ff0000" fill="none"/>';
  s += `<polyline points="${ma.map(p => p.join(',')).join(' ')}" stroke="#ff0000" fill="none"/>`;
  [[745.5, 123.5], [1285.5, 517.5], [1825.5, 910.5]].forEach(([x, y]) => {
    s += `<rect x="${x - 2}" y="${y - 2}" width="4" height="4" fill="#fff" stroke="#ff0000"/>`;
  });
  // frame and last price tag
  s += '<rect x="305.500" y="111.500" width="1535" height="810" fill="none" stroke="#fff"/>';
  s += '<rect x="1843" y="664" width="54" height="14" fill="#778899"/><text x="1846" y="676" fill="#111">1.07801</text>';
  // title
  s += '<rect x="311" y="118" width="18" height="13" fill="#fff"/><rect x="311" y="118" width="9" height="13" fill="#e8453c"/><rect x="320" y="118" width="9" height="13" fill="#2a78b5"/><path d="M311 122.500h18M311 126.500h18M320 118v13" stroke="#fff"/>';
  s += '<text x="337" y="130" fill="#fff" font-size="11.600" xml:space="preserve">EURUSD, H1:  Euro vs US Dollar</text>';
  s += '</g>';
  document.getElementById('chart').innerHTML = s;
</script>
</body>
</html>
